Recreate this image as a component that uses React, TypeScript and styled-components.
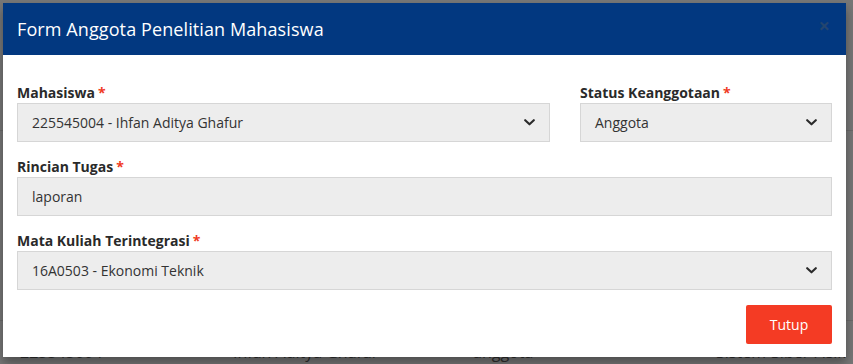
import React from "react";
import styled, { createGlobalStyle } from "styled-components";

const Global = createGlobalStyle`
  html, body { margin: 0; padding: 0; }
  body {
    width: 853px;
    height: 364px;
    overflow: hidden;
    background: #757575;
    font-family: "Open Sans", "Liberation Sans", sans-serif;
  }
  * { box-sizing: border-box; }
`;

const Page = styled.div`
  position: relative;
  width: 853px;
  height: 364px;
  overflow: hidden;
  background: #777777;
`;

const BgTable = styled.div`
  display: flex;
  flex-direction: column;
  padding-top: 130px;
`;

const BgRow = styled.div<{ $h: number }>`
  height: ${(p) => p.$h}px;
  border-top: 1px solid #6a6a6a;
  display: grid;
  grid-template-columns: 20px 213px 240px 243px 1fr;
  align-items: center;
  color: #2e2e2e;
  font-size: 16px;
  white-space: nowrap;
`;

const BgCell = styled.span<{ $col: number }>`
  grid-column: ${(p) => p.$col};
`;

const Overlay = styled.div`
  position: absolute;
  inset: 0;
  padding: 3px 7px 0 3px;
`;

const Modal = styled.div`
  width: 843px;
  height: 354px;
  background: #fff;
  display: flex;
  flex-direction: column;
  box-shadow: 0 6px 10px rgba(0, 0, 0, 0.35);
`;

const Header = styled.div`
  height: 52px;
  background: #023880;
  display: flex;
  align-items: center;
  justify-content: space-between;
  padding: 0 16px 0 14px;
`;

const Title = styled.h5`
  margin: 0;
  color: #fff;
  font-size: 18px;
  font-weight: 400;
  letter-spacing: 0.1px;
`;

const Close = styled.span`
  color: #23456f;
  font-size: 20px;
  font-weight: 700;
  line-height: 1;
  margin-top: -6px;
`;

const Body = styled.div`
  padding: 27px 14px 0 14px;
  display: flex;
  flex-direction: column;
`;

const Row = styled.div`
  display: grid;
  grid-template-columns: 533px 252px;
  column-gap: 30px;
`;

const Group = styled.div<{ $mb?: number }>`
  display: flex;
  flex-direction: column;
  margin-bottom: ${(p) => p.$mb ?? 14}px;
`;

const Label = styled.label`
  font-size: 14px;
  font-weight: 700;
  color: #2a2a2a;
  line-height: 21px;
`;

const Req = styled.span`
  color: #f03a24;
  margin-left: 3px;
`;

const Field = styled.div`
  height: 39px;
  background: #ededed;
  border: 1px solid #d6d6d6;
  display: flex;
  align-items: center;
  justify-content: space-between;
  padding: 0 14px 0 14px;
  font-size: 14px;
  color: #333;
`;

const Chevron = () => (
  <svg width="11" height="7" viewBox="0 0 11 7" fill="none">
    <path d="M1.2 1.2 L5.5 5.3 L9.8 1.2" stroke="#2a2a2a" strokeWidth="2.1" strokeLinecap="round" strokeLinejoin="round" />
  </svg>
);

const Footer = styled.div`
  display: flex;
  justify-content: flex-end;
  padding: 0 14px;
`;

const Button = styled.button`
  width: 86px;
  height: 39px;
  background: #f43b24;
  border: none;
  border-radius: 2px;
  color: #fff;
  font-family: inherit;
  font-size: 14px;
`;

export default function App() {
  return (
    <>
      <Global />
      <Page>
        <BgTable>
          <BgRow $h={190} />
          <BgRow $h={62}>
            <BgCell $col={2}>225545004</BgCell>
            <BgCell $col={3}>Ihfan Aditya Ghafur</BgCell>
            <BgCell $col={4}>anggota</BgCell>
            <BgCell $col={5}>Sistem-Siber Fisik</BgCell>
          </BgRow>
        </BgTable>
        <Overlay>
          <Modal>
            <Header>
              <Title>Form Anggota Penelitian Mahasiswa</Title>
              <Close>×</Close>
            </Header>
            <Body>
              <Row>
                <Group>
                  <Label>
                    Mahasiswa<Req>*</Req>
                  </Label>
                  <Field>
                    <span>225545004 - Ihfan Aditya Ghafur</span>
                    <Chevron />
                  </Field>
                </Group>
                <Group>
                  <Label>
                    Status Keanggotaan<Req>*</Req>
                  </Label>
                  <Field>
                    <span>Anggota</span>
                    <Chevron />
                  </Field>
                </Group>
              </Row>
              <Group>
                <Label>
                  Rincian Tugas<Req>*</Req>
                </Label>
                <Field>
                  <span>laporan</span>
                </Field>
              </Group>
              <Group $mb={15}>
                <Label>
                  Mata Kuliah Terintegrasi<Req>*</Req>
                </Label>
                <Field>
                  <span>16A0503 - Ekonomi Teknik</span>
                  <Chevron />
                </Field>
              </Group>
            </Body>
            <Footer>
              <Button>Tutup</Button>
            </Footer>
          </Modal>
        </Overlay>
      </Page>
    </>
  );
}
